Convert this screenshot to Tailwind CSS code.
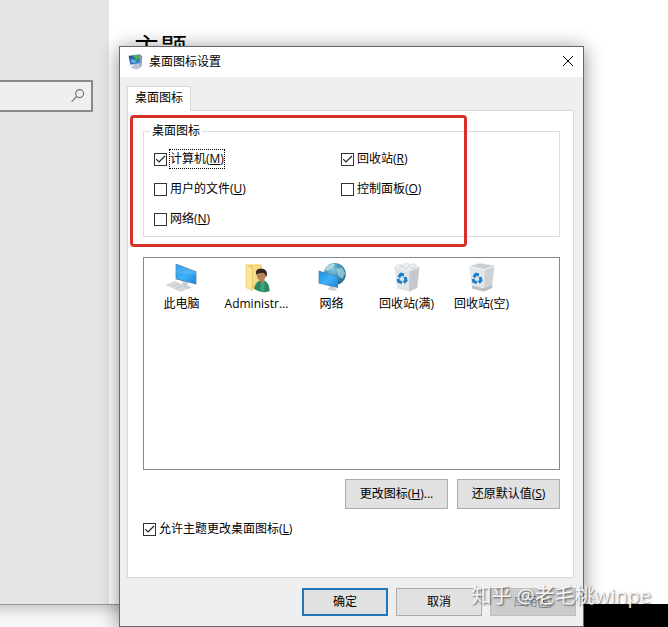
<!DOCTYPE html>
<html lang="zh-CN">
<head>
  <meta charset="UTF-8" />
  <meta name="viewport" content="width=device-width, initial-scale=1.0"/>
  <title>桌面图标设置</title>
  <script src="https://cdn.jsdelivr.net/npm/@tailwindcss/browser@4"></script>
</head>
<body class="relative min-h-screen overflow-hidden flex flex-col bg-black text-black text-[12px] leading-[18px] font-['Open_Sans','Noto_Sans_CJK_SC',sans-serif]">

  <!-- Settings window behind the dialog -->
  <div class="flex-1 flex bg-white">
    <aside class="w-[109px] bg-[#e5e5e5] pt-20">
      <div class="relative w-[93px]">
        <input type="text" aria-label="查找设置" class="block w-full h-8 bg-[#efefef] border-2 border-l-0 border-[#8a8a8a] outline-none pr-7">
        <svg class="absolute right-2 top-2 w-4 h-4" viewBox="0 0 16 16" fill="none" stroke="#707070" stroke-width="1.1">
          <circle cx="10.6" cy="5.6" r="4"/>
          <path d="M7.7 8.5 L2.6 13.6"/>
        </svg>
      </div>
    </aside>
    <main class="flex-1 pl-6 pt-[30px]">
      <h1 class="text-[27px] leading-9">主题</h1>
    </main>
  </div>

  <!-- Strip below the settings window -->
  <div class="flex h-[23px]">
    <div class="w-[211px] border-t border-[#969696] bg-linear-to-b from-[#d0d0d0] via-[#f2f2f2] to-[#f7f7f7]"></div>
    <div class="flex-1 bg-black"></div>
  </div>

  <!-- Desktop icon dialog -->
  <section role="dialog" aria-labelledby="dialogTitle" class="absolute left-[119px] right-[84px] top-[46px] border border-[#66686a] bg-[#efefef] shadow-[0_2px_18px_rgba(0,0,0,0.45)]">
    <header class="flex items-center h-[30px] bg-white pl-2 pr-[7px]">
      <svg class="w-4 h-4 mr-[5px]" viewBox="0 0 16 16">
        <defs>
          <linearGradient id="desk" x1="0" y1="0" x2="1" y2="1">
            <stop offset="0" stop-color="#23449b"/>
            <stop offset="1" stop-color="#3f8fd8"/>
          </linearGradient>
        </defs>
        <path d="M0.3 1.4 L12 0 L14 2 L13 10.5 L2 11.5 Z" fill="#b9c6da"/>
        <path d="M0.8 2 L12.2 0.8 L11.8 9.2 L2.4 10.2 Z" fill="url(#desk)"/>
        <path d="M4 1.6 L12.2 0.8 L12 5 Q10 4 8 6.4 Q7 3.5 4 1.6Z" fill="#4fae4c"/>
        <path d="M3 5.6 Q6 4.4 8.4 7.4 L6 9 L3 8Z" fill="#58c0d6"/>
        <path d="M12.2 0.8 L14.4 2.2 L13.4 13 L11.4 12 Z" fill="#8e9cc0"/>
        <path d="M6 11 L11 10.6 L12.8 13.6 L9 15.6 L2.6 13.8 Z" fill="#bfc2d0"/>
      </svg>
      <h2 id="dialogTitle" class="flex-1">桌面图标设置</h2>
      <button type="button" aria-label="关闭" class="w-4 h-4">
        <svg class="w-4 h-4" viewBox="0 0 16 16" fill="none" stroke="#000" stroke-width="1">
          <path d="M3 2 L13 12 M13 2 L3 12"/>
        </svg>
      </button>
    </header>

    <div class="pl-[7px] pr-[9px] pt-[9px]">
      <!-- Tab -->
      <div role="tablist" class="flex">
        <button type="button" role="tab" aria-selected="true" class="relative z-10 -mb-px h-[25px] px-[7px] pb-[2px] bg-white border border-b-0 border-[#d9d9d9]">桌面图标</button>
      </div>

      <div class="bg-white border border-[#d9d9d9] pl-[15px] pr-[13px] pt-[11px] pb-[39px]">
        <div class="relative">
          <fieldset class="border border-[#dcdcdc] pl-[10px] pt-[10px] pb-2">
            <legend class="-ml-1 px-[2px]">桌面图标</legend>
            <div class="grid grid-cols-[6fr_7fr] gap-y-3">
              <label class="flex items-center gap-[3px] relative">
                <input type="checkbox" checked class="peer appearance-none w-[13px] h-[13px] bg-white border border-[#333]">
                <svg class="absolute left-0 w-[13px] h-[13px] hidden peer-checked:block" viewBox="0 0 13 13" fill="none" stroke="#222" stroke-width="1.2"><path d="M2.2 6.2 L5 9 L11 3"/></svg>
                <span class="outline-1 outline-dotted outline-black">计算机(<u>M</u>)</span>
              </label>
              <label class="flex items-center gap-[3px] relative">
                <input type="checkbox" checked class="peer appearance-none w-[13px] h-[13px] bg-white border border-[#333]">
                <svg class="absolute left-0 w-[13px] h-[13px] hidden peer-checked:block" viewBox="0 0 13 13" fill="none" stroke="#222" stroke-width="1.2"><path d="M2.2 6.2 L5 9 L11 3"/></svg>
                <span>回收站(<u>R</u>)</span>
              </label>
              <label class="flex items-center gap-[3px]">
                <input type="checkbox" class="appearance-none w-[13px] h-[13px] bg-white border border-[#333]">
                <span>用户的文件(<u>U</u>)</span>
              </label>
              <label class="flex items-center gap-[3px]">
                <input type="checkbox" class="appearance-none w-[13px] h-[13px] bg-white border border-[#333]">
                <span>控制面板(<u>O</u>)</span>
              </label>
              <label class="flex items-center gap-[3px]">
                <input type="checkbox" class="appearance-none w-[13px] h-[13px] bg-white border border-[#333]">
                <span>网络(<u>N</u>)</span>
              </label>
            </div>
          </fieldset>
          <!-- Red highlight frame -->
          <div class="absolute -left-[13px] right-[93px] -top-[7px] -bottom-[10px] border-3 border-[#d6322a] rounded-sm pointer-events-none"></div>
        </div>

        <!-- Icon list -->
        <ul class="mt-5 min-h-[213px] flex items-start border border-[#828790] pt-1 text-center">
          <li class="w-[75px] flex flex-col items-center">
            <svg class="w-8 h-8" viewBox="0 0 32 32">
              <defs>
                <linearGradient id="scr" x1="0" y1="0" x2="1" y2="1">
                  <stop offset="0" stop-color="#1c8fe3"/>
                  <stop offset="0.5" stop-color="#3fb1f7"/>
                  <stop offset="1" stop-color="#1a86dc"/>
                </linearGradient>
              </defs>
              <path d="M16 19 L22 20.5 L21.5 23.5 L26 25.5 L22.5 27 L14 24 L17 22.5 Z" fill="#c5ccd3"/>
              <path d="M9.6 1.6 L30.4 9.4 L30.4 22.6 L9.6 17.2 Z" fill="#5b7f9c"/>
              <path d="M10.2 2.6 L29.8 10 L29.8 21.8 L10.2 16.6 Z" fill="url(#scr)"/>
              <path d="M10.2 2.6 L29.8 10 L29.8 12 L10.2 12 Z" fill="#6cc4fa" opacity="0.35"/>
              <path d="M0.6 23 L9 19.6 L22 25.6 L15 29.6 Z" fill="#e3e6e9" stroke="#adb4bb" stroke-width="0.5"/>
              <path d="M3 22.6 L16.6 28 M5 21.8 L18.6 27 M7.2 20.8 L20.4 26 M6.5 24.5 L12.5 21.5 M10.5 26.5 L16.5 23.5" stroke="#b4bbc2" stroke-width="0.5"/>
            </svg>
            <span class="mt-px">此电脑</span>
          </li>
          <li class="w-[75px] flex flex-col items-center">
            <svg class="w-8 h-8" viewBox="0 0 32 32">
              <path d="M5 2.4 L21 2.4 L21 26 L10 27 Z" fill="#f0cb62"/>
              <path d="M12 3.4 L20.4 3.4 L20.4 20 L12 24 Z" fill="#f7dc86"/>
              <path d="M5 2.8 L11.4 6 L11.4 29 L5 25.6 Z" fill="#fbe596" stroke="#e2bd57" stroke-width="0.5"/>
              <path d="M13.2 27 Q13.8 20 20.4 17.8 Q28.4 18.8 28.8 29 Q20.6 32.2 13.2 27Z" fill="#2c8763"/>
              <path d="M20.4 18 L24.2 21 L23 30 L19 29.6 Z" fill="#3fa379"/>
              <path d="M17.8 17 L23.6 17 L22.2 22 Z" fill="#b47c52"/>
              <ellipse cx="20.3" cy="13" rx="4.6" ry="5.8" fill="#b88460"/>
              <path d="M15 12.4 Q14 6.8 20 6.6 Q26.4 6.8 26 13 L24.8 15.6 Q24.8 11.4 21.8 10.8 Q17.4 11.2 15 12.4Z" fill="#33261f"/>
            </svg>
            <span class="mt-px">Administr...</span>
          </li>
          <li class="w-[75px] flex flex-col items-center">
            <svg class="w-8 h-8" viewBox="0 0 32 32">
              <defs>
                <radialGradient id="globe" cx="0.4" cy="0.3" r="0.8">
                  <stop offset="0" stop-color="#86c6de"/>
                  <stop offset="0.6" stop-color="#3486ac"/>
                  <stop offset="1" stop-color="#1d5c83"/>
                </radialGradient>
              </defs>
              <circle cx="18.8" cy="12" r="11" fill="url(#globe)"/>
              <path d="M10.6 5 Q15 0.8 19 2 L17 6 L13 8 L9 9 Z" fill="#b9deea" opacity="0.85"/>
              <path d="M20 7 L26 5.4 L29.2 11 L26.4 17 L22.6 14 Z" fill="#a5d2e2" opacity="0.75"/>
              <path d="M13 22 L18 23 L18.4 26 L22 27.6 L18 29 L11 27 L14 25 Z" fill="#c9d0d6"/>
              <path d="M2.6 8.6 L22 14.6 L22 26 L2.6 21.6 Z" fill="#4c86b0"/>
              <path d="M3.2 9.6 L21.3 15.2 L21.3 25 L3.2 21 Z" fill="url(#scr)"/>
            </svg>
            <span class="mt-px">网络</span>
          </li>
          <li class="w-[75px] flex flex-col items-center">
            <svg class="w-8 h-8" viewBox="0 0 32 32">
              <path d="M3.6 5 L8 2 L12 3.4 L15 1 L19 2.6 L23 1.6 L28.4 5.6 L26 10 L6 10 Z" fill="#eceeef" stroke="#ccd0d4" stroke-width="0.6"/>
              <path d="M3.6 6 L18.4 9.4 L28.4 5.6 L26.2 26 L18 29.4 L6.4 26.4 Z" fill="#e2e5e8"/>
              <path d="M18.4 9.4 L28.4 5.6 L26.2 26 L18 29.4 Z" fill="#c4cacf"/>
              <path d="M8 6 L11 4 L14 7 L18 4 L21 7 L25 4.6 M20 13 L24 11 L22 17 L25 20" fill="none" stroke="#b1b8be" stroke-width="0.6"/>
              <g fill="none" stroke="#1b7fd0" stroke-width="3">
                <path d="M7.8 15.4 L9.8 12.2 L13 13"/>
                <path d="M14 15 L15 18.4 L12.8 20.6"/>
                <path d="M11 20.6 L7.6 19.4 L7 16.8"/>
              </g>
            </svg>
            <span class="mt-px">回收站(满)</span>
          </li>
          <li class="w-[75px] flex flex-col items-center">
            <svg class="w-8 h-8" viewBox="0 0 32 32">
              <path d="M3 4 L13.6 1.4 L28.4 3.6 L18.6 7.6 Z" fill="#c9ced2" stroke="#dfe3e6" stroke-width="0.6"/>
              <path d="M3 4.4 L18.6 7.8 L17.8 29.4 L6.2 26.4 Z" fill="#e4e7e9"/>
              <path d="M18.6 7.8 L28.4 4 L26 26 L17.8 29.4 Z" fill="#cdd2d6"/>
              <path d="M6 23.4 L17.9 26.4 L26.3 23 L26 26 L17.8 29.4 L6.2 26.4 Z" fill="#a9b0b6" opacity="0.7"/>
              <path d="M3 4.4 L18.6 7.8 L28.4 4" fill="none" stroke="#f6f7f8" stroke-width="0.8"/>
              <g fill="none" stroke="#1b7fd0" stroke-width="3">
                <path d="M7.8 15.4 L9.8 12.2 L13 13"/>
                <path d="M14 15 L15 18.4 L12.8 20.6"/>
                <path d="M11 20.6 L7.6 19.4 L7 16.8"/>
              </g>
            </svg>
            <span class="mt-px">回收站(空)</span>
          </li>
        </ul>

        <div class="mt-[9px] flex justify-end gap-[9px]">
          <button type="button" class="w-[103px] h-[30px] bg-[#e1e1e1] border border-[#adadad]">更改图标(<u>H</u>)...</button>
          <button type="button" class="w-[103px] h-[30px] bg-[#e1e1e1] border border-[#adadad]">还原默认值(<u>S</u>)</button>
        </div>

        <label class="relative mt-[11px] flex items-center gap-[3px]">
          <input type="checkbox" checked class="peer appearance-none w-[13px] h-[13px] bg-white border border-[#333]">
          <svg class="absolute left-0 w-[13px] h-[13px] hidden peer-checked:block" viewBox="0 0 13 13" fill="none" stroke="#222" stroke-width="1.2"><path d="M2.2 6.2 L5 9 L11 3"/></svg>
          <span>允许主题更改桌面图标(<u>L</u>)</span>
        </label>
      </div>
    </div>

    <!-- Dialog buttons -->
    <footer class="flex justify-end gap-2 pt-[10px] pb-[10px] pr-[7px]">
      <button type="button" class="w-[86px] h-7 bg-[#e1e1e1] border-2 border-[#1f76b8]">确定</button>
      <button type="button" class="w-[86px] h-7 bg-[#e1e1e1] border border-[#adadad]">取消</button>
      <button type="button" disabled class="w-[86px] h-7 bg-[#cccccc] border border-[#bfbfbf] text-[#838383]">应用(<u>A</u>)</button>
    </footer>
  </section>

  <!-- Watermark -->
  <p class="absolute right-[17px] bottom-4 text-[20px] leading-[30px] text-white/90 [text-shadow:1px_1px_2px_rgba(0,0,0,0.6)]">知乎 @老毛桃winpe</p>
</body>
</html>
